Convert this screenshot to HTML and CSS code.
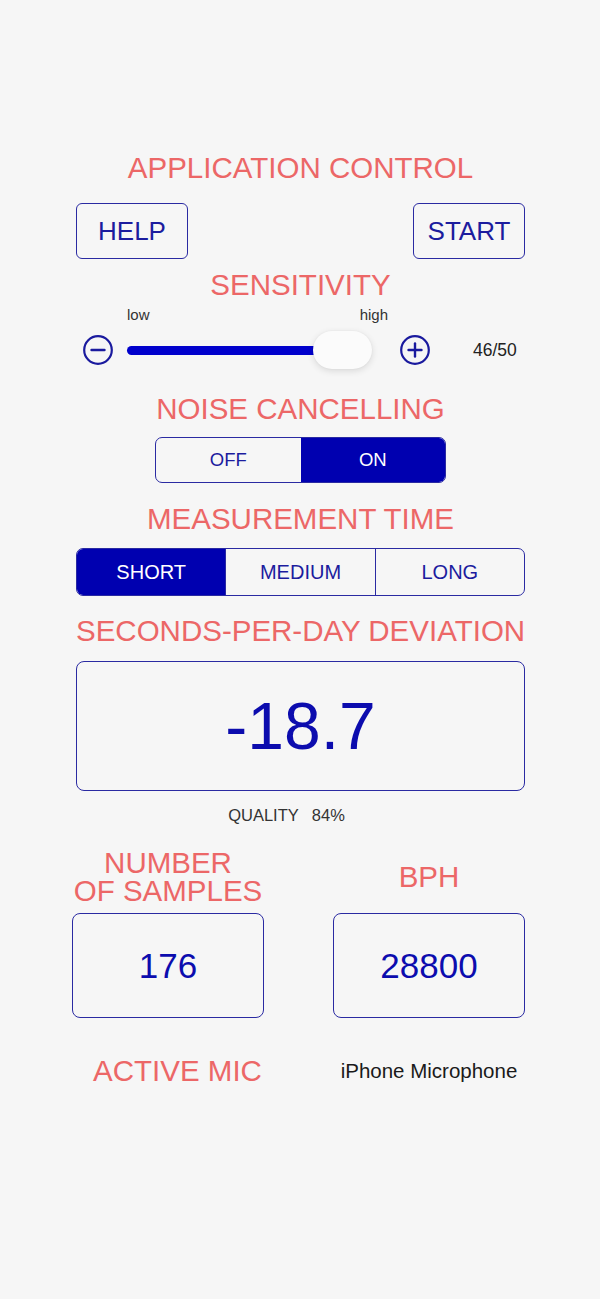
FILE: index.html
```html
<!DOCTYPE html>
<html>
<head>
<meta charset="utf-8">
<link rel="stylesheet" href="styles.css">
</head>
<body>
<main class="page">
  <h2 class="title">APPLICATION CONTROL</h2>
  <div class="btn-row">
    <div class="btn">HELP</div>
    <div class="btn">START</div>
  </div>

  <h2 class="title t-sens">SENSITIVITY</h2>
  <div class="slider-block">
    <div class="slider-labels"><span>low</span><span>high</span></div>
    <div class="slider-row">
      <svg class="round-btn" viewBox="0 0 30 30" width="30" height="30">
        <circle cx="15" cy="15" r="13.8" fill="none" stroke="#1a1a9e" stroke-width="2.2"/>
        <line x1="8.5" y1="15" x2="21.5" y2="15" stroke="#1a1a9e" stroke-width="2.4" stroke-linecap="round"/>
      </svg>
      <div class="slider">
        <div class="track-fill" style="width:215px"></div>
        <div class="thumb" style="left:186px"></div>
      </div>
      <svg class="round-btn plus" viewBox="0 0 30 30" width="30" height="30">
        <circle cx="15" cy="15" r="13.8" fill="none" stroke="#1a1a9e" stroke-width="2.2"/>
        <line x1="8.5" y1="15" x2="21.5" y2="15" stroke="#1a1a9e" stroke-width="2.4" stroke-linecap="round"/>
        <line x1="15" y1="8.5" x2="15" y2="21.5" stroke="#1a1a9e" stroke-width="2.4" stroke-linecap="round"/>
      </svg>
      <span class="slider-value">46/50</span>
    </div>
  </div>

  <h2 class="title t-noise">NOISE CANCELLING</h2>
  <div class="toggle">
    <div class="seg">OFF</div>
    <div class="seg active">ON</div>
  </div>

  <h2 class="title t-meas">MEASUREMENT TIME</h2>
  <div class="segmented">
    <div class="seg active">SHORT</div>
    <div class="seg">MEDIUM</div>
    <div class="seg">LONG</div>
  </div>

  <h2 class="title t-dev">SECONDS-PER-DAY DEVIATION</h2>
  <div class="dev-box">-18.7</div>
  <div class="quality">QUALITY<span class="q-val">84%</span></div>

  <div class="stats">
    <div class="stat-label"><span class="lbl-line">NUMBER</span><span class="lbl-line">OF SAMPLES</span></div>
    <div class="stat-label"><span class="lbl-line">BPH</span></div>
    <div class="stat-box">176</div>
    <div class="stat-box">28800</div>
  </div>
  <div class="mic-row">
    <div class="mic-label">ACTIVE MIC</div>
    <div class="mic-name">iPhone Microphone</div>
  </div>
</main>
</body>
</html>
```

FILE: styles.css
```css
html, body {
  margin: 0;
  padding: 0;
  background: #f6f6f6;
}

body {
  font-family: "Liberation Sans", Arial, sans-serif;
  width: 600px;
  height: 1299px;
  overflow: hidden;
}

.page {
  box-sizing: border-box;
  width: 600px;
  padding: 150px 75px 0 76px;
  display: flex;
  flex-direction: column;
}

.title {
  margin: 0;
  font-weight: normal;
  font-size: 29.5px;
  line-height: 36px;
  height: 36px;
  color: #ec6767;
  text-align: center;
  white-space: nowrap;
}

.btn-row {
  margin-top: 17px;
  display: flex;
  justify-content: space-between;
}

.btn {
  box-sizing: border-box;
  width: 112px;
  height: 56px;
  border: 1.5px solid #2a2aa2;
  border-radius: 6px;
  display: flex;
  align-items: center;
  justify-content: center;
  font-size: 26px;
  color: #1c1c9e;
}

.t-sens { margin-top: 8px; }

.slider-block {
  display: flex;
  flex-direction: column;
}

.slider-labels {
  margin-top: 3px;
  margin-left: 51px;
  width: 261px;
  display: flex;
  justify-content: space-between;
  font-size: 15px;
  line-height: 18px;
  color: #333;
}

.slider-row {
  margin-top: 6px;
  height: 40px;
  display: flex;
  align-items: center;
}

.round-btn {
  display: block;
  margin-left: 7px;
  flex: none;
}

.round-btn.plus {
  margin-left: 12px;
}

.slider {
  position: relative;
  margin-left: 14px;
  width: 261px;
  height: 40px;
  flex: none;
}

.track-fill {
  position: absolute;
  left: 0;
  top: 16px;
  height: 9px;
  border-radius: 4.5px;
  background: #0000cc;
}

.thumb {
  position: absolute;
  top: 1px;
  width: 59px;
  height: 38px;
  border-radius: 19px;
  background: #fbfbfb;
  box-shadow: 0 2px 7px rgba(0, 0, 0, 0.12), 0 0 2px rgba(0, 0, 0, 0.05);
}

.slider-value {
  margin-left: 43px;
  font-size: 17.5px;
  color: #222;
}

.t-noise { margin-top: 21px; }

.toggle {
  box-sizing: border-box;
  margin: 10px auto 0;
  width: 291px;
  height: 46px;
  border: 1.5px solid #2a2aa2;
  border-radius: 7px;
  overflow: hidden;
  display: flex;
}

.seg {
  flex: 1;
  display: flex;
  align-items: center;
  justify-content: center;
  color: #1c1c9e;
}

.toggle .seg {
  font-size: 18.5px;
}

.segmented .seg {
  font-size: 20px;
}

.segmented .seg + .seg {
  border-left: 1.5px solid #2a2aa2;
}

.toggle .seg.active,
.segmented .seg.active {
  background: #0000b0;
  color: #ffffff;
}

.t-meas { margin-top: 18px; }

.segmented {
  box-sizing: border-box;
  margin-top: 11px;
  height: 48px;
  border: 1.5px solid #2a2aa2;
  border-radius: 7px;
  overflow: hidden;
  display: flex;
}

.t-dev { margin-top: 17px; }

.dev-box {
  box-sizing: border-box;
  margin-top: 12px;
  height: 130px;
  border: 1.5px solid #2a2aa2;
  border-radius: 8px;
  display: flex;
  align-items: center;
  justify-content: center;
  font-size: 66px;
  color: #0c0cae;
}

.quality {
  margin-top: 14px;
  padding-right: 28px;
  line-height: 20px;
  text-align: center;
  font-size: 16.5px;
  color: #333;
}

.q-val {
  margin-left: 13px;
}

.stats {
  margin: 24px 0 0 -4px;
  display: grid;
  grid-template-columns: 192px 192px;
  column-gap: 69px;
  grid-template-rows: 56px 105px;
  row-gap: 8px;
}

.stat-label {
  display: flex;
  flex-direction: column;
  align-items: center;
  justify-content: center;
  text-align: center;
  font-size: 29.5px;
  color: #ec6767;
  white-space: nowrap;
}

.lbl-line {
  display: block;
  height: 28px;
  line-height: 28px;
}

.stat-box {
  box-sizing: border-box;
  border: 1.5px solid #2a2aa2;
  border-radius: 8px;
  display: flex;
  align-items: center;
  justify-content: center;
  font-size: 35px;
  color: #0c0cae;
}

.mic-row {
  margin: 35px 0 0 -4px;
  display: grid;
  grid-template-columns: 192px 192px;
  column-gap: 69px;
  height: 36px;
}

.mic-label {
  padding-left: 19px;
  font-size: 29.5px;
  line-height: 36px;
  color: #ec6767;
  text-align: center;
  white-space: nowrap;
}

.mic-name {
  display: flex;
  align-items: center;
  justify-content: center;
  font-size: 20.5px;
  color: #1a1a1a;
}
```
